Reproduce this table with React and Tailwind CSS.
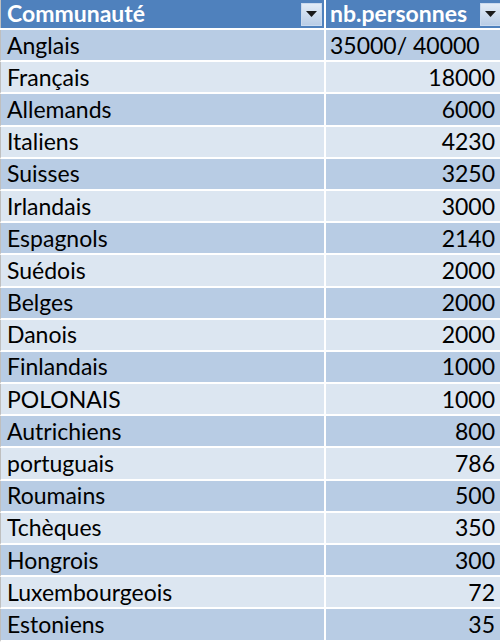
const rows = [
  ["Anglais", "35000/ 40000"],
  ["Français", "18000"],
  ["Allemands", "6000"],
  ["Italiens", "4230"],
  ["Suisses", "3250"],
  ["Irlandais", "3000"],
  ["Espagnols", "2140"],
  ["Suédois", "2000"],
  ["Belges", "2000"],
  ["Danois", "2000"],
  ["Finlandais", "1000"],
  ["POLONAIS", "1000"],
  ["Autrichiens", "800"],
  ["portuguais", "786"],
  ["Roumains", "500"],
  ["Tchèques", "350"],
  ["Hongrois", "300"],
  ["Luxembourgeois", "72"],
  ["Estoniens", "35"],
];

const FilterButton = () => (
  <div className="w-[21px] h-[23px] shrink-0 border border-[#c9d9ee] bg-gradient-to-b from-[#e3ecf7] to-[#b9cde6] flex items-center justify-center">
    <svg width="11" height="6" viewBox="0 0 11 6">
      <path d="M0 0 H11 L5.5 6 Z" fill="#1a1a1a" />
    </svg>
  </div>
);

export default function App() {
  return (
    <div className="w-[500px] h-[644px] overflow-hidden bg-white font-['Lato',sans-serif] text-[23px] leading-none">
      <div className="grid grid-cols-[323px_175px] gap-x-[2px] border-l border-[#bfbfbf]">
        <div className="h-[28px] bg-[#4f81bd] flex items-center justify-between pl-[6px] pr-[2px] text-white font-bold">
          <span className="-mt-[2px]">Communauté</span>
          <FilterButton />
        </div>
        <div className="h-[28px] bg-[#4f81bd] flex items-center justify-between pl-[4px] text-white font-bold">
          <span className="-mt-[2px]">nb.personnes</span>
          <FilterButton />
        </div>
      </div>
      <div className="h-[2px] bg-white" />
      {rows.map(([name, count], i) => {
        const bg = i % 2 === 0 ? "bg-[#b8cce4]" : "bg-[#dce6f1]";
        return (
          <div
            key={name}
            className="grid grid-cols-[323px_175px] gap-x-[2px] border-l border-[#bfbfbf] border-b-2 border-b-white h-[32.2px]"
          >
            <div className={`${bg} flex items-center pl-[6px] text-black`}>{name}</div>
            <div
              className={`${bg} flex items-center text-black ${
                i === 0 ? "justify-start pl-[4px]" : "justify-end pr-[6px]"
              }`}
            >
              {count}
            </div>
          </div>
        );
      })}
    </div>
  );
}
